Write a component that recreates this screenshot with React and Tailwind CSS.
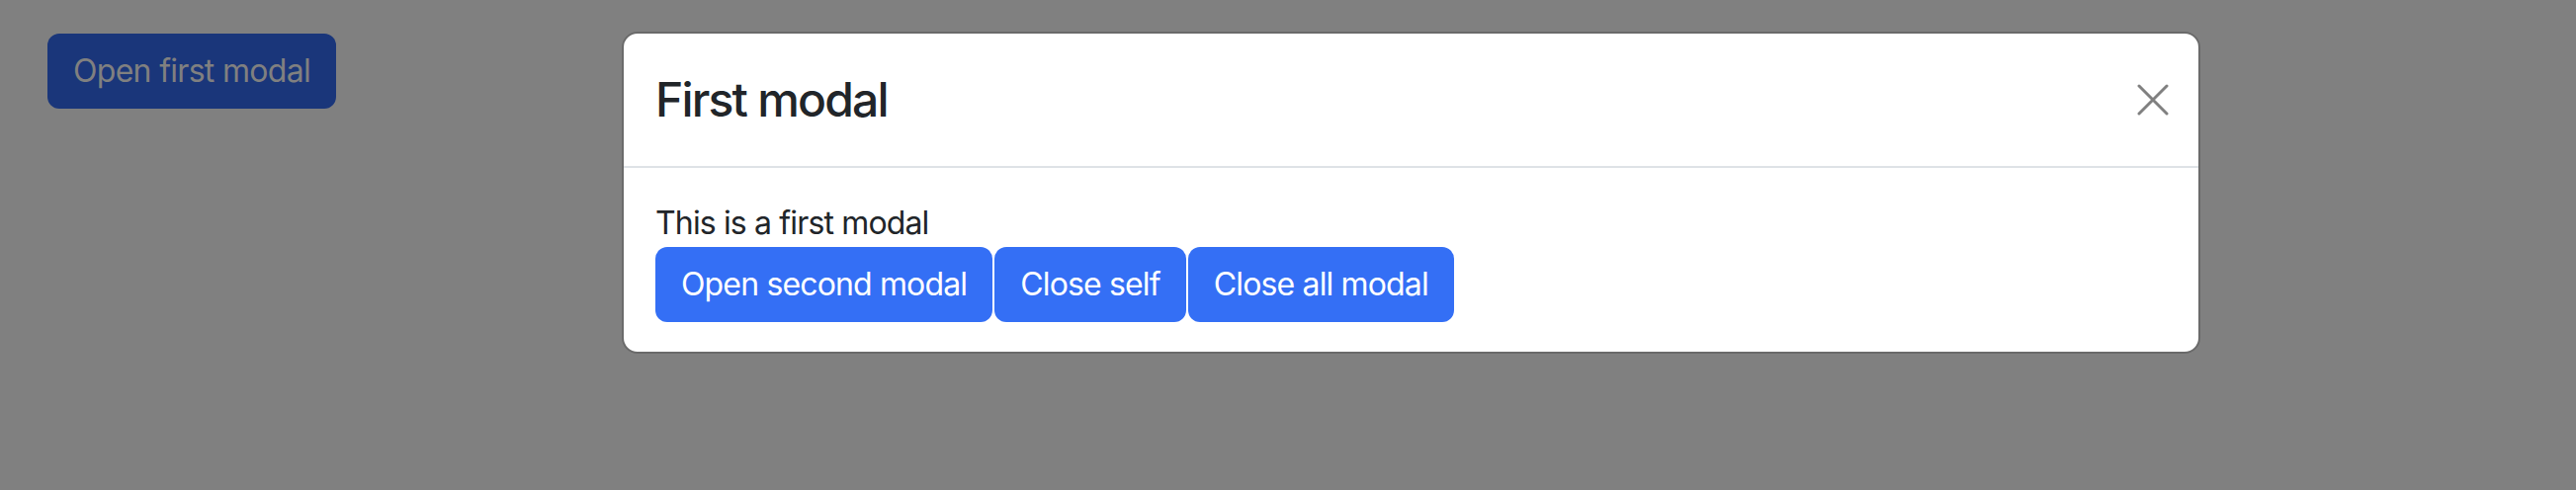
export default function App() {
  return (
    <div className="relative w-[2606px] h-[496px] overflow-hidden bg-[#808080] font-['Inter',sans-serif]">
      <div className="pt-[34px] pl-[48px]">
        <button className="h-[76px] px-[26px] rounded-[12px] bg-[#1a367a] text-[#808080] text-[32px] leading-[48px] tracking-[-0.7px]">
          Open first modal
        </button>
      </div>

      <div className="absolute left-[629px] top-[32px] w-[1597px] rounded-[16px] border-2 border-[#6a6a6a] bg-white text-[#212529]">
        <div className="flex items-center justify-between h-[136px] pl-[32px] pr-[30px] border-b-2 border-[#dee2e6]">
          <h5 className="text-[48px] leading-[72px] font-medium tracking-[-1.8px]">First modal</h5>
          <svg width="32" height="32" viewBox="0 0 32 32" className="block">
            <path d="M2 2 L30 30 M30 2 L2 30" stroke="#808080" strokeWidth="3" strokeLinecap="round" />
          </svg>
        </div>
        <div className="pt-[32px] pb-[30px] px-[32px]">
          <p className="text-[32px] leading-[48px] tracking-[-0.85px]">This is a first modal</p>
          <div className="flex gap-[2px]">
            <button className="h-[76px] px-[26px] rounded-[12px] bg-[#346ff5] text-white text-[32px] leading-[48px] tracking-[-0.85px]">
              Open second modal
            </button>
            <button className="h-[76px] px-[26px] rounded-[12px] bg-[#346ff5] text-white text-[32px] leading-[48px] tracking-[-0.85px]">
              Close self
            </button>
            <button className="h-[76px] px-[26px] rounded-[12px] bg-[#346ff5] text-white text-[32px] leading-[48px] tracking-[-0.85px]">
              Close all modal
            </button>
          </div>
        </div>
      </div>
    </div>
  );
}
